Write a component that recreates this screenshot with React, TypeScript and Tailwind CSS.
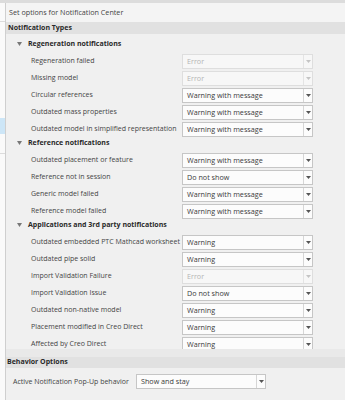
import React from "react";

type Row = { label: string; value: string; disabled?: boolean };

const GROUPS: { title: string; rows: Row[] }[] = [
  {
    title: "Regeneration notifications",
    rows: [
      { label: "Regeneration failed", value: "Error", disabled: true },
      { label: "Missing model", value: "Error", disabled: true },
      { label: "Circular references", value: "Warning with message" },
      { label: "Outdated mass properties", value: "Warning with message" },
      { label: "Outdated model in simplified representation", value: "Warning with message" },
    ],
  },
  {
    title: "Reference notifications",
    rows: [
      { label: "Outdated placement or feature", value: "Warning with message" },
      { label: "Reference not in session", value: "Do not show" },
      { label: "Generic model failed", value: "Warning with message" },
      { label: "Reference model failed", value: "Warning with message" },
    ],
  },
  {
    title: "Applications and 3rd party notifications",
    rows: [
      { label: "Outdated embedded PTC Mathcad worksheet", value: "Warning" },
      { label: "Outdated pipe solid", value: "Warning" },
      { label: "Import Validation Failure", value: "Error", disabled: true },
      { label: "Import Validation Issue", value: "Do not show" },
      { label: "Outdated non-native model", value: "Warning" },
      { label: "Placement modified in Creo Direct", value: "Warning" },
      { label: "Affected by Creo Direct", value: "Warning" },
    ],
  },
];

function Select({ value, disabled, width = "w-[131px]" }: { value: string; disabled?: boolean; width?: string }) {
  return (
    <div
      className={`${width} h-[15px] flex shrink-0 border text-[7.2px] ${
        disabled ? "border-[#dedede] bg-[#f7f7f7] text-[#b4b4b4]" : "border-[#c6c6c6] bg-[#fcfcfc] text-[#3a3a3a]"
      }`}
    >
      <span className="flex-1 pl-[4px] leading-[13px] whitespace-nowrap overflow-hidden">{value}</span>
      <span className={`w-[9px] flex items-center justify-center border-l ${disabled ? "border-[#e4e4e4]" : "border-[#d6d6d6]"}`}>
        <svg width="5" height="3" viewBox="0 0 5 3">
          <path d="M0 0h5L2.5 3z" fill={disabled ? "#c4c4c4" : "#555"} />
        </svg>
      </span>
    </div>
  );
}

export default function App() {
  return (
    <div
      className="w-[345px] h-[400px] bg-[#f0f0f0] flex flex-col overflow-hidden text-[7px] text-[#444]"
      style={{ fontFamily: '"Open Sans", "Noto Sans", sans-serif' }}
    >
      <div className="h-[3px] bg-[#dcdcdc] shrink-0" />
      <div className="flex flex-1 min-h-0">
        {/* leftover sidebar edge */}
        <div className="w-[6px] shrink-0 bg-[#fafafa] border-r border-[#cfcfcf] flex flex-col">
          <div className="h-[19px] border-b border-[#dcdcdc]" />
          <div className="h-[96px]" />
          <div className="h-[16px] bg-[#cde6f7]" />
          <div className="h-[20px] border-b border-[#dcdcdc]" />
        </div>

        <div className="flex-1 flex flex-col min-w-0">
          <div className="h-[19px] bg-[#f4f4f4] pl-[3px] flex items-center text-[7.2px] text-[#444]">Set options for Notification Center</div>
          <div className="h-[12px] bg-[#e1e1e1] pl-[2px] flex items-center font-bold text-[#2a2a2a]">Notification Types</div>

          <div className="h-[315px] shrink-0 overflow-hidden pt-[5px]">
            {GROUPS.map((g) => (
              <div key={g.title}>
                <div className="h-[14px] flex items-start pl-[11px] font-bold leading-[10px] text-[#2a2a2a]">
                  <svg width="5" height="4" viewBox="0 0 5 4" className="mr-[6px] mt-[3px]">
                    <path d="M0 0h5L2.5 4z" fill="#777" />
                  </svg>
                  {g.title}
                </div>
                {g.rows.map((r) => (
                  <div key={r.label} className="h-[17px] flex items-center">
                    <div className="w-[176px] shrink-0 pl-[25px] whitespace-nowrap">{r.label}</div>
                    <Select value={r.value} disabled={r.disabled} />
                  </div>
                ))}
              </div>
            ))}
          </div>

          <div className="h-[8px] bg-[#e9e9e9]" />
          <div className="h-[11px] bg-[#e1e1e1] pl-[1px] flex items-center font-bold text-[#2a2a2a]">Behavior Options</div>
          <div className="h-[32px] flex items-start pt-[6px]">
            <div className="w-[130px] pl-[7px] leading-[15px] whitespace-nowrap">Active Notification Pop-Up behavior</div>
            <Select value="Show and stay" width="w-[130px]" />
          </div>
        </div>
      </div>
    </div>
  );
}
